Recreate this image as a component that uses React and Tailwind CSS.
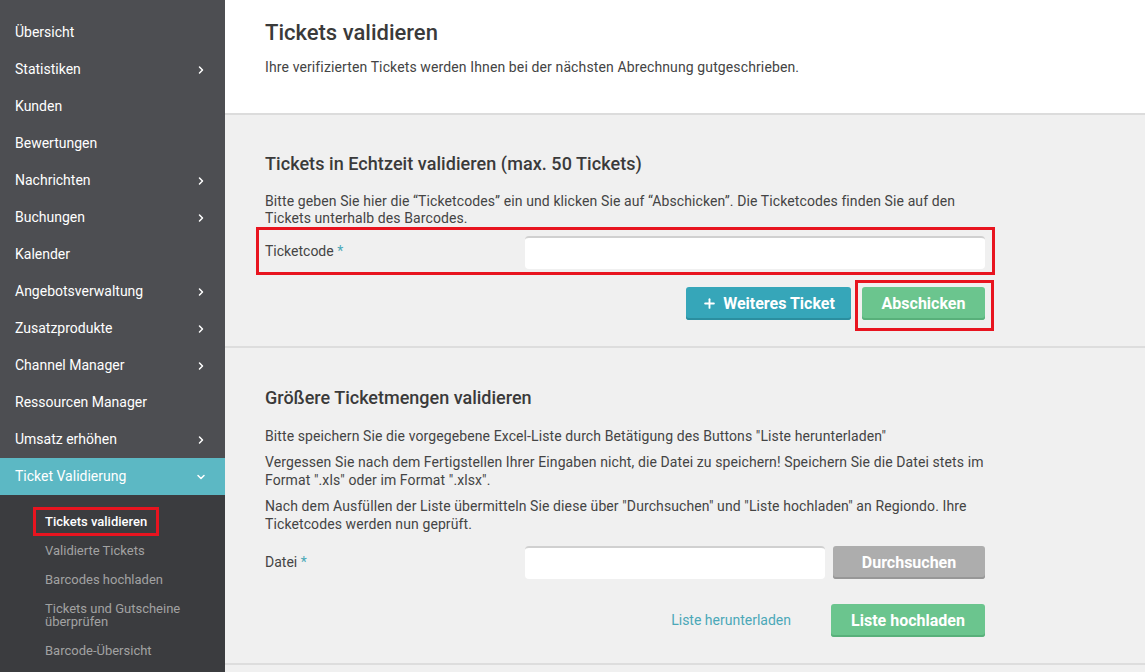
import { ChevronRight, ChevronDown, Plus } from 'lucide-react';

const menu = [
  { label: 'Übersicht' },
  { label: 'Statistiken', sub: true },
  { label: 'Kunden' },
  { label: 'Bewertungen' },
  { label: 'Nachrichten', sub: true },
  { label: 'Buchungen', sub: true },
  { label: 'Kalender' },
  { label: 'Angebotsverwaltung', sub: true },
  { label: 'Zusatzprodukte', sub: true },
  { label: 'Channel Manager', sub: true },
  { label: 'Ressourcen Manager' },
  { label: 'Umsatz erhöhen', sub: true },
];

const subMenu = [
  { label: 'Validierte Tickets' },
  { label: 'Barcodes hochladen' },
  { label: 'Tickets und Gutscheine überprüfen', wrap: true },
  { label: 'Barcode-Übersicht' },
];

const Sidebar = () => {
  return (
    <aside className="w-[225px] shrink-0 bg-[#3b3c3f] flex flex-col">
      <div className="bg-[#4d4e52] pt-[14px]">
        {menu.map(item => (
          <div key={item.label} className="h-[37px] flex items-center justify-between pl-[15px] pr-[18px] text-[14px] text-white">
            <span>{item.label}</span>
            {item.sub && <ChevronRight size={12} strokeWidth={3} />}
          </div>
        ))}
        {/* aktiver Menüpunkt */}
        <div className="h-[37px] flex items-center justify-between pl-[15px] pr-[18px] text-[14px] text-white bg-[#5cb8c4]">
          <span>Ticket Validierung</span>
          <ChevronDown size={12} strokeWidth={3} />
        </div>
      </div>

      {/* Untermenü */}
      <div className="pt-[12px] text-[13px]">
        <div className="h-[29px] flex items-center">
          <span className="ml-[33px] h-[29px] flex items-center border-[3px] border-[#e8141f] pl-[9px] pr-[9px] text-white font-medium">
            Tickets validieren
          </span>
        </div>
        {subMenu.map(item => (
          <div
            key={item.label}
            className={`pl-[45px] pr-[20px] text-[#a2a2a2] ${item.wrap ? 'py-[8px] leading-[13px]' : 'h-[29px] flex items-center'}`}
          >
            {item.label}
          </div>
        ))}
      </div>
    </aside>
  );
};

const Label = ({ children }) => (
  <label className="w-[260px] shrink-0 text-[14px] text-[#444]">
    {children} <span className="text-[#4aa8b8]">*</span>
  </label>
);

const App = () => {
  return (
    <div className="flex h-screen min-h-[672px] overflow-hidden font-['Roboto',sans-serif]">
      <Sidebar />

      <main className="flex-1 bg-[#f0f0f0]">
        {/* Kopfbereich */}
        <div className="h-[115px] bg-white border-b-2 border-[#dcdcdc] pt-[20px] px-[40px]">
          <h1 className="text-[22px] leading-[26px] font-medium text-[#3a3a3a]">Tickets validieren</h1>
          <p className="mt-[11px] text-[14px] leading-[20px] text-[#444] tracking-[0.12px]">
            Ihre verifizierten Tickets werden Ihnen bei der nächsten Abrechnung gutgeschrieben.
          </p>
        </div>

        {/* Echtzeit validieren */}
        <section className="pt-[37px] pb-[15px] pl-[40px] pr-[160px] border-b-2 border-[#dddddd]">
          <h2 className="text-[18px] leading-[24px] font-medium text-[#3a3a3a] tracking-[0.06px]">
            Tickets in Echtzeit validieren (max. 50 Tickets)
          </h2>
          <p className="mt-[17px] text-[14px] leading-[17px] text-[#444] tracking-[0.1px]">
            Bitte geben Sie hier die “Ticketcodes” ein und klicken Sie auf “Abschicken”. Die Ticketcodes finden Sie auf den Tickets unterhalb des Barcodes.
          </p>

          <div className="-ml-[9px] -mr-[10px] h-[48px] border-[3px] border-[#e8141f] pl-[6px] pr-[7px] flex items-center">
            <Label>Ticketcode</Label>
            <input type="text" className="flex-1 h-[33px] mt-[3px] bg-white rounded-[4px] border-t-2 border-[#d0d0d0] outline-none" />
          </div>

          <div className="mt-[5px] -mr-[9px] flex justify-end items-start gap-[4px]">
            <button className="mt-[7px] h-[33px] w-[165px] rounded-[3px] bg-[#36a6b9] shadow-[inset_0_-2px_0_#2b8e9f] text-white text-[16px] font-bold flex items-center justify-center gap-[6px]">
              <Plus size={15} strokeWidth={3} />
              Weiteres Ticket
            </button>
            <div className="border-[3px] border-[#e8141f] pt-[4px] pb-[8px] pl-[4px] pr-[6px]">
              <button className="h-[33px] w-[123px] rounded-[3px] bg-[#6bc58e] shadow-[inset_0_-2px_0_#58b07a] text-white text-[16px] font-bold">
                Abschicken
              </button>
            </div>
          </div>
        </section>

        {/* Größere Mengen */}
        <section className="pt-[38px] pb-[26px] pl-[40px] pr-[160px] border-b-2 border-[#dddddd]">
          <h2 className="text-[18px] leading-[24px] font-medium text-[#3a3a3a]">
            Größere Ticketmengen validieren
          </h2>
          <div className="mt-[17px] text-[14px] leading-[18px] text-[#444] flex flex-col gap-[8px] tracking-[0.1px]">
            <p>Bitte speichern Sie die vorgegebene Excel-Liste durch Betätigung des Buttons "Liste herunterladen"</p>
            <p>Vergessen Sie nach dem Fertigstellen Ihrer Eingaben nicht, die Datei zu speichern! Speichern Sie die Datei stets im Format ".xls" oder im Format ".xlsx".</p>
            <p>Nach dem Ausfüllen der Liste übermitteln Sie diese über "Durchsuchen" und "Liste hochladen" an Regiondo. Ihre Ticketcodes werden nun geprüft.</p>
          </div>

          <div className="mt-[13px] flex items-center">
            <Label>Datei</Label>
            <input type="text" className="w-[300px] h-[33px] bg-white rounded-[4px] border-t-2 border-[#d0d0d0] outline-none" />
            <button className="ml-[8px] flex-1 h-[33px] rounded-[3px] bg-[#adadad] shadow-[inset_0_-2px_0_#979797] text-white text-[16px] font-bold">
              Durchsuchen
            </button>
          </div>

          <div className="mt-[25px] flex items-center justify-end gap-[40px]">
            <a className="text-[14px] text-[#4ba8b8]">Liste herunterladen</a>
            <button className="h-[33px] w-[154px] rounded-[3px] bg-[#6bc58e] shadow-[inset_0_-2px_0_#58b07a] text-white text-[16px] font-bold">
              Liste hochladen
            </button>
          </div>
        </section>
      </main>
    </div>
  );
};

export default App;
